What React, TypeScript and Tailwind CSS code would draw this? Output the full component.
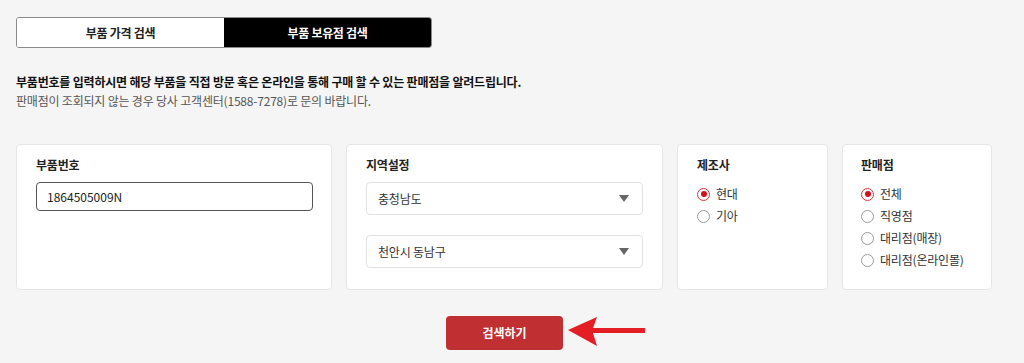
import { useState } from 'react'

const font = { fontFamily: '"Noto Sans CJK KR", "Noto Sans", sans-serif' }

function Radio({ label, checked, onClick }: { label: string; checked: boolean; onClick: () => void }) {
    return (
        <button
            type="button"
            onClick={onClick}
            className="flex items-center gap-[6px] h-[22px] text-[12px] tracking-[-0.2px] text-[#333] whitespace-nowrap"
        >
            <span
                className={
                    checked
                        ? 'w-[13px] h-[13px] rounded-full border border-[#d9393f] flex items-center justify-center bg-white'
                        : 'w-[13px] h-[13px] rounded-full border border-[#9a9a9a] bg-white'
                }
            >
                {checked && <span className="w-[6px] h-[6px] rounded-full bg-[#d0121b]" />}
            </span>
            {label}
        </button>
    )
}

function Select({ value }: { value: string }) {
    return (
        <div className="h-[33px] border border-[#e2e2e2] rounded-[4px] bg-white flex items-center justify-between pl-[11px] pr-[13px] text-[12px] tracking-[-0.2px] text-[#333]">
            <span>{value}</span>
            <svg width="10" height="7" viewBox="0 0 10 7">
                <path d="M0 0 L10 0 L5 7 Z" fill="#666" />
            </svg>
        </div>
    )
}

export default function App() {
    const [tab, setTab] = useState(1)
    const [maker, setMaker] = useState('현대')
    const [shop, setShop] = useState('전체')

    return (
        <div className="min-h-screen bg-[#f5f5f5] px-4 pt-[17px] text-[#222]" style={font}>
            {/* tabs */}
            <div className="flex w-[416px] h-[31px] border border-[#8a8a8a] rounded-[3px] overflow-hidden text-[12px] tracking-[-0.3px] font-bold">
                <button
                    onClick={() => setTab(0)}
                    className={tab === 0 ? 'flex-1 bg-black text-white' : 'flex-1 bg-white text-[#222]'}
                >
                    부품 가격 검색
                </button>
                <button
                    onClick={() => setTab(1)}
                    className={tab === 1 ? 'flex-1 bg-black text-white' : 'flex-1 bg-white text-[#222]'}
                >
                    부품 보유점 검색
                </button>
            </div>

            <div className="mt-[24px] text-[12px] tracking-[-0.2px] leading-[19px]">
                <p className="font-bold text-[#111]">
                    부품번호를 입력하시면 해당 부품을 직접 방문 혹은 온라인을 통해 구매 할 수 있는 판매점을 알려드립니다.
                </p>
                <p className="text-[#555]">판매점이 조회되지 않는 경우 당사 고객센터(1588-7278)로 문의 바랍니다.</p>
            </div>

            {/* search cards */}
            <div className="mt-[34px] flex gap-[14px] h-[146px]">
                <div className="w-[316px] bg-white border border-[#e6e6e6] rounded-[4px] px-[19px] pt-[11px]">
                    <p className="text-[12px] tracking-[-0.2px] font-bold leading-[18px]">부품번호</p>
                    <input
                        defaultValue="1864505009N"
                        className="mt-[8px] w-[277px] h-[29px] border border-[#555] rounded-[4px] px-[10px] text-[12px] text-[#222] outline-none"
                        style={font}
                    />
                </div>

                <div className="w-[317px] bg-white border border-[#e6e6e6] rounded-[4px] px-[19px] pt-[11px]">
                    <p className="text-[12px] tracking-[-0.2px] font-bold leading-[18px]">지역설정</p>
                    <div className="mt-[8px] flex flex-col gap-[20px]">
                        <Select value="충청남도" />
                        <Select value="천안시 동남구" />
                    </div>
                </div>

                <div className="w-[151px] bg-white border border-[#e6e6e6] rounded-[4px] px-[19px] pt-[11px]">
                    <p className="text-[12px] tracking-[-0.2px] font-bold leading-[18px]">제조사</p>
                    <div className="mt-[9px] flex flex-col">
                        {['현대', '기아'].map((m) => (
                            <Radio key={m} label={m} checked={maker === m} onClick={() => setMaker(m)} />
                        ))}
                    </div>
                </div>

                <div className="w-[150px] bg-white border border-[#e6e6e6] rounded-[4px] px-[18px] pt-[11px]">
                    <p className="text-[12px] tracking-[-0.2px] font-bold leading-[18px]">판매점</p>
                    <div className="mt-[9px] flex flex-col">
                        {['전체', '직영점', '대리점(매장)', '대리점(온라인몰)'].map((s) => (
                            <Radio key={s} label={s} checked={shop === s} onClick={() => setShop(s)} />
                        ))}
                    </div>
                </div>
            </div>

            <div className="mt-[26px] w-[977px] flex justify-center">
                <div className="relative">
                    <button className="w-[117px] h-[34px] rounded-[4px] bg-[#c03033] text-white text-[12px] font-bold">
                        검색하기
                    </button>
                    <svg
                        className="absolute left-[121px] top-0"
                        width="80"
                        height="34"
                        viewBox="0 0 80 34"
                    >
                        <path d="M1 14 L30 1 L26 12 L78 12 L78 17 L26 17 L30 30 Z" fill="#e31e24" />
                    </svg>
                </div>
            </div>
        </div>
    )
}
